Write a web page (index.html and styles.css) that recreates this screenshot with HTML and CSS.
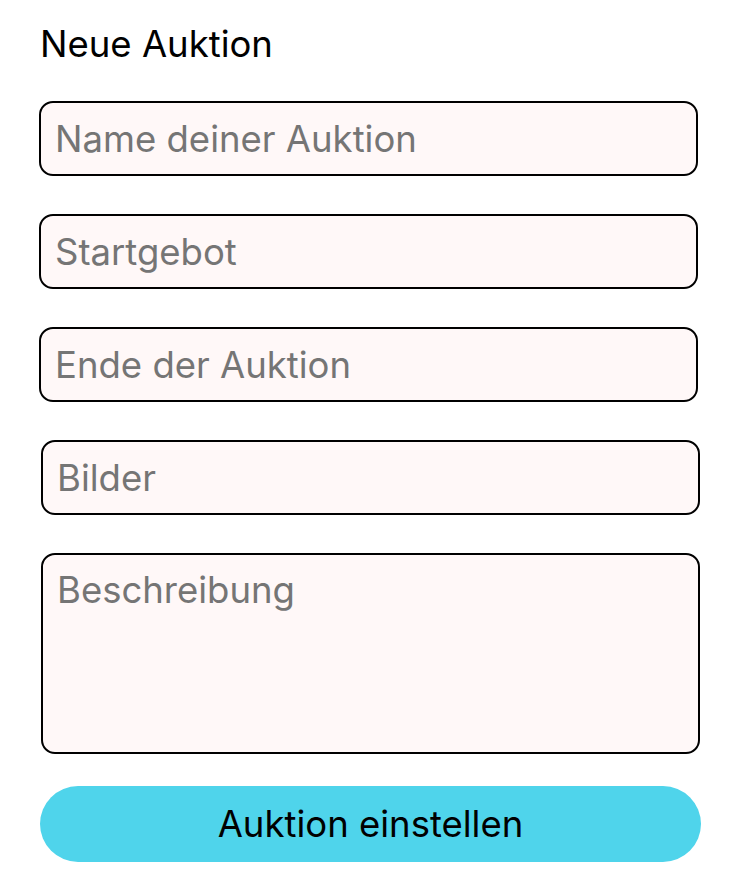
FILE: index.html
```html
<!DOCTYPE html>
<html lang="de">
<head>
<meta charset="utf-8">
<title>Neue Auktion</title>
<link rel="stylesheet" href="styles.css">
</head>
<body>
<main class="page">
  <h1 class="title">Neue Auktion</h1>
  <form class="form">
    <input class="field" type="text" placeholder="Name deiner Auktion">
    <input class="field" type="text" placeholder="Startgebot">
    <input class="field" type="text" placeholder="Ende der Auktion">
    <input class="field field-shift" type="text" placeholder="Bilder">
    <textarea class="field field-shift area" placeholder="Beschreibung"></textarea>
    <button class="submit" type="button">Auktion einstellen</button>
  </form>
</main>
</body>
</html>
```
FILE: styles.css
```css
html, body {
  margin: 0;
  padding: 0;
  background: #ffffff;
}
body {
  font-family: "Inter", "Liberation Sans", sans-serif;
  color: #000;
}
.page {
  padding: 22px 42px 0 39px;
}
.title {
  margin: 0 0 0 1px;
  font-size: 36.5px;
  font-weight: 400;
  line-height: 44px;
}
.form {
  display: flex;
  flex-direction: column;
  margin-top: 35px;
  gap: 38px;
}
.field {
  box-sizing: border-box;
  width: 659px;
  height: 75px;
  margin: 0;
  padding: 0 14px;
  border: 2px solid #000;
  border-radius: 14px;
  background: #fff8f8;
  font-family: "Inter", "Liberation Sans", sans-serif;
  font-size: 36.5px;
  color: #000;
  outline: none;
}
.field::placeholder {
  color: #757575;
  opacity: 1;
}
.field-shift {
  margin-left: 2px;
}
.area {
  height: 201px;
  padding: 13px 14px;
  resize: none;
  display: block;
}
.submit {
  margin: -6px 0 0 1px;
  width: 661px;
  height: 76px;
  border: none;
  border-radius: 38px;
  background: #4fd4eb;
  font-family: "Inter", "Liberation Sans", sans-serif;
  font-size: 36.5px;
  color: #000;
  cursor: pointer;
}
```
